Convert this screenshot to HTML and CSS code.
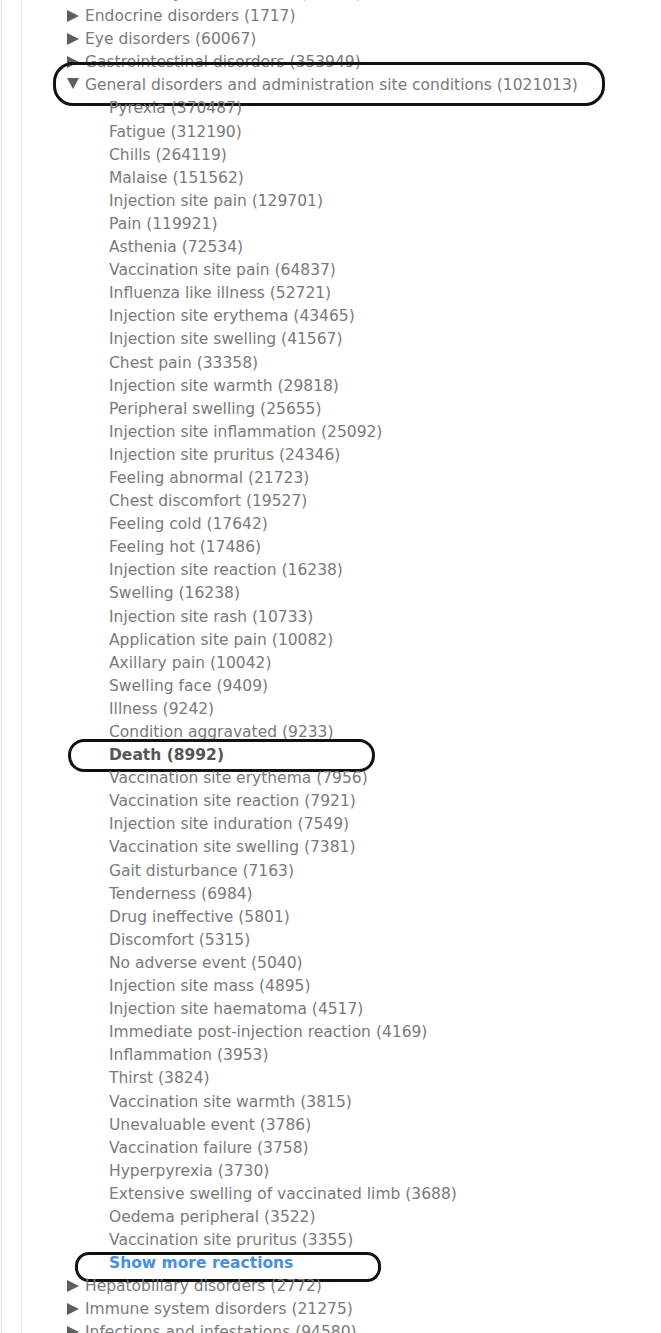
FILE: index.html
```html
<!DOCTYPE html>
<html lang="en">
<head>
    <meta charset="UTF-8">
    <meta name="viewport" content="width=device-width, initial-scale=1.0">
    <title>Reactions</title>
    <link rel="stylesheet" href="styles.css">
</head>
<body>
    <div class="page">
        <div class="panel">
            <ul class="tree">
                <li class="group"><span class="toggle"></span>Ear and labyrinth disorders (41352)</li>
                <li class="group"><span class="toggle"></span>Endocrine disorders (1717)</li>
                <li class="group"><span class="toggle"></span>Eye disorders (60067)</li>
                <li class="group"><span class="toggle"></span>Gastrointestinal disorders (353949)</li>
                <li class="group open">
                    <div class="group-label"><span class="toggle"></span>General disorders and administration site conditions (1021013)</div>
                    <span class="mark mark-general"></span>
                    <ul class="reactions">
                        <li>Pyrexia (370487)</li>
                        <li>Fatigue (312190)</li>
                        <li>Chills (264119)</li>
                        <li>Malaise (151562)</li>
                        <li>Injection site pain (129701)</li>
                        <li>Pain (119921)</li>
                        <li>Asthenia (72534)</li>
                        <li>Vaccination site pain (64837)</li>
                        <li>Influenza like illness (52721)</li>
                        <li>Injection site erythema (43465)</li>
                        <li>Injection site swelling (41567)</li>
                        <li>Chest pain (33358)</li>
                        <li>Injection site warmth (29818)</li>
                        <li>Peripheral swelling (25655)</li>
                        <li>Injection site inflammation (25092)</li>
                        <li>Injection site pruritus (24346)</li>
                        <li>Feeling abnormal (21723)</li>
                        <li>Chest discomfort (19527)</li>
                        <li>Feeling cold (17642)</li>
                        <li>Feeling hot (17486)</li>
                        <li>Injection site reaction (16238)</li>
                        <li>Swelling (16238)</li>
                        <li>Injection site rash (10733)</li>
                        <li>Application site pain (10082)</li>
                        <li>Axillary pain (10042)</li>
                        <li>Swelling face (9409)</li>
                        <li>Illness (9242)</li>
                        <li>Condition aggravated (9233)</li>
                        <li class="death">Death (8992)<span class="mark mark-death"></span></li>
                        <li>Vaccination site erythema (7956)</li>
                        <li>Vaccination site reaction (7921)</li>
                        <li>Injection site induration (7549)</li>
                        <li>Vaccination site swelling (7381)</li>
                        <li>Gait disturbance (7163)</li>
                        <li>Tenderness (6984)</li>
                        <li>Drug ineffective (5801)</li>
                        <li>Discomfort (5315)</li>
                        <li>No adverse event (5040)</li>
                        <li>Injection site mass (4895)</li>
                        <li>Injection site haematoma (4517)</li>
                        <li>Immediate post-injection reaction (4169)</li>
                        <li>Inflammation (3953)</li>
                        <li>Thirst (3824)</li>
                        <li>Vaccination site warmth (3815)</li>
                        <li>Unevaluable event (3786)</li>
                        <li>Vaccination failure (3758)</li>
                        <li>Hyperpyrexia (3730)</li>
                        <li>Extensive swelling of vaccinated limb (3688)</li>
                        <li>Oedema peripheral (3522)</li>
                        <li>Vaccination site pruritus (3355)</li>
                        <li class="more"><a href="#">Show more reactions</a><span class="mark mark-more"></span></li>
                    </ul>
                </li>
                <li class="group"><span class="toggle"></span>Hepatobiliary disorders (2772)</li>
                <li class="group"><span class="toggle"></span>Immune system disorders (21275)</li>
                <li class="group"><span class="toggle"></span>Infections and infestations (94580)</li>
            </ul>
        </div>
    </div>
</body>
</html>
```

FILE: styles.css
```css
body {
    margin: 0;
    padding: 0;
    background-color: #fff;
    font-family: "DejaVu Sans", sans-serif;
    font-size: 15.5px;
    color: #7a7a7a;
    overflow: hidden;
}

.page {
    border-left: 1px solid #e2e2e2;
    margin-left: 1px;
    height: 1333px;
}

.panel {
    display: flow-root;
    margin-left: 19px;
    border-left: 1px solid #e2e2e2;
    height: 100%;
}

.tree {
    list-style: none;
    margin: -18px 0 0 0;
    padding: 0 0 0 45px;
    line-height: 23.1px;
}

.group {
    position: relative;
    white-space: nowrap;
}

/* collapsed arrow */
.toggle {
    display: inline-block;
    width: 0;
    height: 0;
    margin-right: 6px;
    border-left: 12px solid #5e5e5e;
    border-top: 6.5px solid transparent;
    border-bottom: 6.5px solid transparent;
    vertical-align: -1px;
}

.open .toggle {
    margin-right: 6px;
    border-left: 6px solid transparent;
    border-right: 6px solid transparent;
    border-top: 11px solid #5e5e5e;
    border-bottom: 0;
    vertical-align: 1px;
}

.reactions {
    list-style: none;
    margin: 0;
    padding: 0 0 0 42px;
}

.reactions li {
    position: relative;
    white-space: nowrap;
}

.death {
    font-weight: bold;
    color: #555;
}

.more a {
    color: #4a90d9;
    font-weight: bold;
    text-decoration: none;
}

/* hand-drawn annotation ovals */
.mark {
    position: absolute;
    border: 3px solid #111;
    border-radius: 20px;
    pointer-events: none;
}

.mark-general {
    left: -14px;
    top: -12px;
    width: 546px;
    height: 38px;
}

.mark-death {
    left: -41px;
    top: -5px;
    width: 301px;
    height: 27px;
    border-radius: 16px;
}

.mark-more {
    left: -34px;
    top: 0;
    width: 300px;
    height: 24px;
    border-radius: 14px;
}
```
